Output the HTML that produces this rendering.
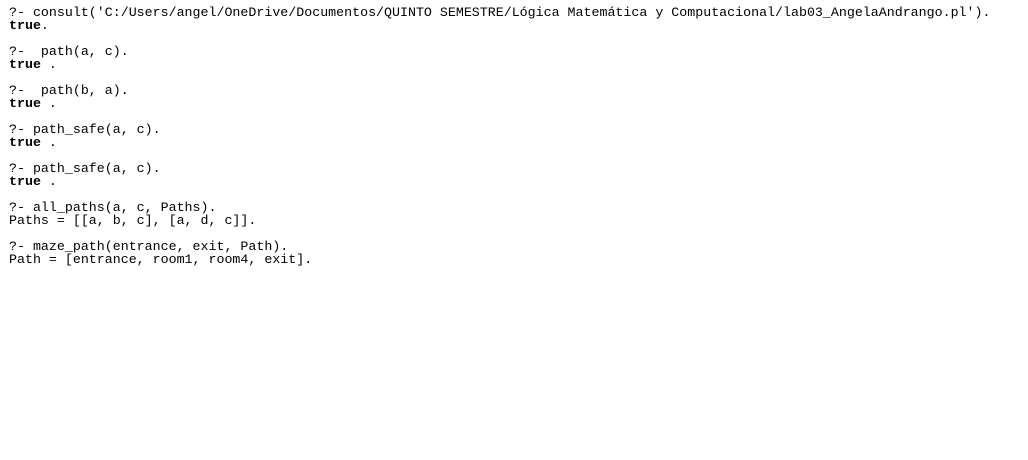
<!DOCTYPE html>
<html><head><meta charset="utf-8"><style>
html,body{margin:0;padding:0;background:#fff;width:1028px;height:460px;overflow:hidden}
pre{margin:0;position:absolute;left:9px;top:6px;font-family:"Liberation Mono",monospace;font-size:13.3px;line-height:13px;color:#000}
b{font-weight:bold}
</style></head><body><pre>?- consult('C:/Users/angel/OneDrive/Documentos/QUINTO SEMESTRE/Lógica Matemática y Computacional/lab03_AngelaAndrango.pl').
<b>true</b>.

?-  path(a, c).
<b>true</b> .

?-  path(b, a).
<b>true</b> .

?- path_safe(a, c).
<b>true</b> .

?- path_safe(a, c).
<b>true</b> .

?- all_paths(a, c, Paths).
Paths = [[a, b, c], [a, d, c]].

?- maze_path(entrance, exit, Path).
Path = [entrance, room1, room4, exit].</pre></body></html>
